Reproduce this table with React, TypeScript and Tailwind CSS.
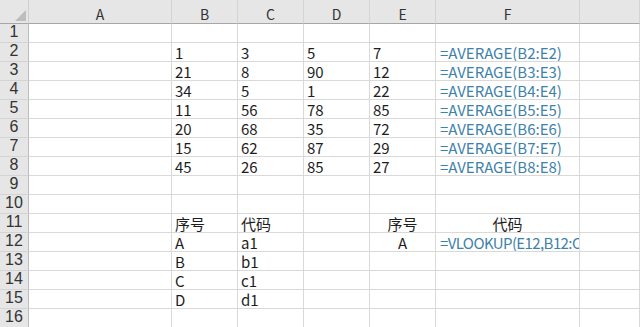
import React from "react";

type Cell = { v: string; align?: "left" | "center"; formula?: boolean; tight?: boolean };

const cols = ["A", "B", "C", "D", "E", "F", ""];

const c = (v: string, align: "left" | "center" = "left"): Cell => ({ v, align });
const f = (v: string, tight = false): Cell => ({ v, formula: true, tight });

// sheet contents, keyed by row number; each row lists columns A..G
const data: Record<number, (Cell | null)[]> = {
  2: [null, c("1"), c("3"), c("5"), c("7"), f("=AVERAGE(B2:E2)"), null],
  3: [null, c("21"), c("8"), c("90"), c("12"), f("=AVERAGE(B3:E3)"), null],
  4: [null, c("34"), c("5"), c("1"), c("22"), f("=AVERAGE(B4:E4)"), null],
  5: [null, c("11"), c("56"), c("78"), c("85"), f("=AVERAGE(B5:E5)"), null],
  6: [null, c("20"), c("68"), c("35"), c("72"), f("=AVERAGE(B6:E6)"), null],
  7: [null, c("15"), c("62"), c("87"), c("29"), f("=AVERAGE(B7:E7)"), null],
  8: [null, c("45"), c("26"), c("85"), c("27"), f("=AVERAGE(B8:E8)"), null],
  11: [null, c("序号"), c("代码"), null, c("序号", "center"), c("代码", "center"), null],
  12: [null, c("A"), c("a1"), null, c("A", "center"), f("=VLOOKUP(E12,B12:C", true), null],
  13: [null, c("B"), c("b1"), null, null, null, null],
  14: [null, c("C"), c("c1"), null, null, null, null],
  15: [null, c("D"), c("d1"), null, null, null, null],
};

const rows = Array.from({ length: 16 }, (_, i) => i + 1);

const SheetCell = ({ cell }: { cell: Cell | null }) => (
  <div
    className={
      "flex h-[19px] items-end overflow-hidden whitespace-nowrap border-r border-b border-[#d9d9d9] bg-white pb-[1px] text-[15px] leading-none " +
      (cell?.align === "center" ? "justify-center" : "pl-[3px]") +
      (cell?.formula ? " pl-[4px] text-[#3d82aa]" : " text-[#1e1e1e]") +
      (cell?.tight ? " tracking-[-0.6px]" : "")
    }
  >
    {cell?.v}
  </div>
);

export default function App() {
  return (
    <div
      className="h-[327px] w-[640px] overflow-hidden bg-white"
      style={{ fontFamily: '"Noto Sans CJK SC", "Liberation Sans", sans-serif' }}
    >
      <div className="grid grid-cols-[29px_143px_66px_66px_66px_66px_144px_1fr]">
        {/* corner */}
        <div className="relative h-[24px] border-r border-b border-r-[#cfcfcf] border-b-[#a6a6a6] bg-[#e6e6e6]">
          <svg className="absolute left-[15px] top-[10px]" width="11" height="11" viewBox="0 0 11 11">
            <path d="M11 0 L11 11 L0 11 Z" fill="#bdbdbd" />
          </svg>
        </div>
        {cols.map((col, i) => (
          <div
            key={i}
            className="flex h-[24px] items-end justify-center border-r border-b border-r-[#d4d4d4] border-b-[#a6a6a6] bg-[#e6e6e6] pb-[2px] text-[14px] leading-none text-[#333]"
          >
            {col}
          </div>
        ))}
        {rows.map((r) => (
          <React.Fragment key={r}>
            <div className="flex h-[19px] items-end justify-center border-r border-b border-r-[#bcbcbc] border-b-[#d4d4d4] bg-[#e6e6e6] pb-[2px] font-['Liberation_Sans',sans-serif] text-[16px] leading-none text-[#333]">
              {r}
            </div>
            {cols.map((_, i) => (
              <SheetCell key={i} cell={data[r]?.[i] ?? null} />
            ))}
          </React.Fragment>
        ))}
      </div>
    </div>
  );
}
